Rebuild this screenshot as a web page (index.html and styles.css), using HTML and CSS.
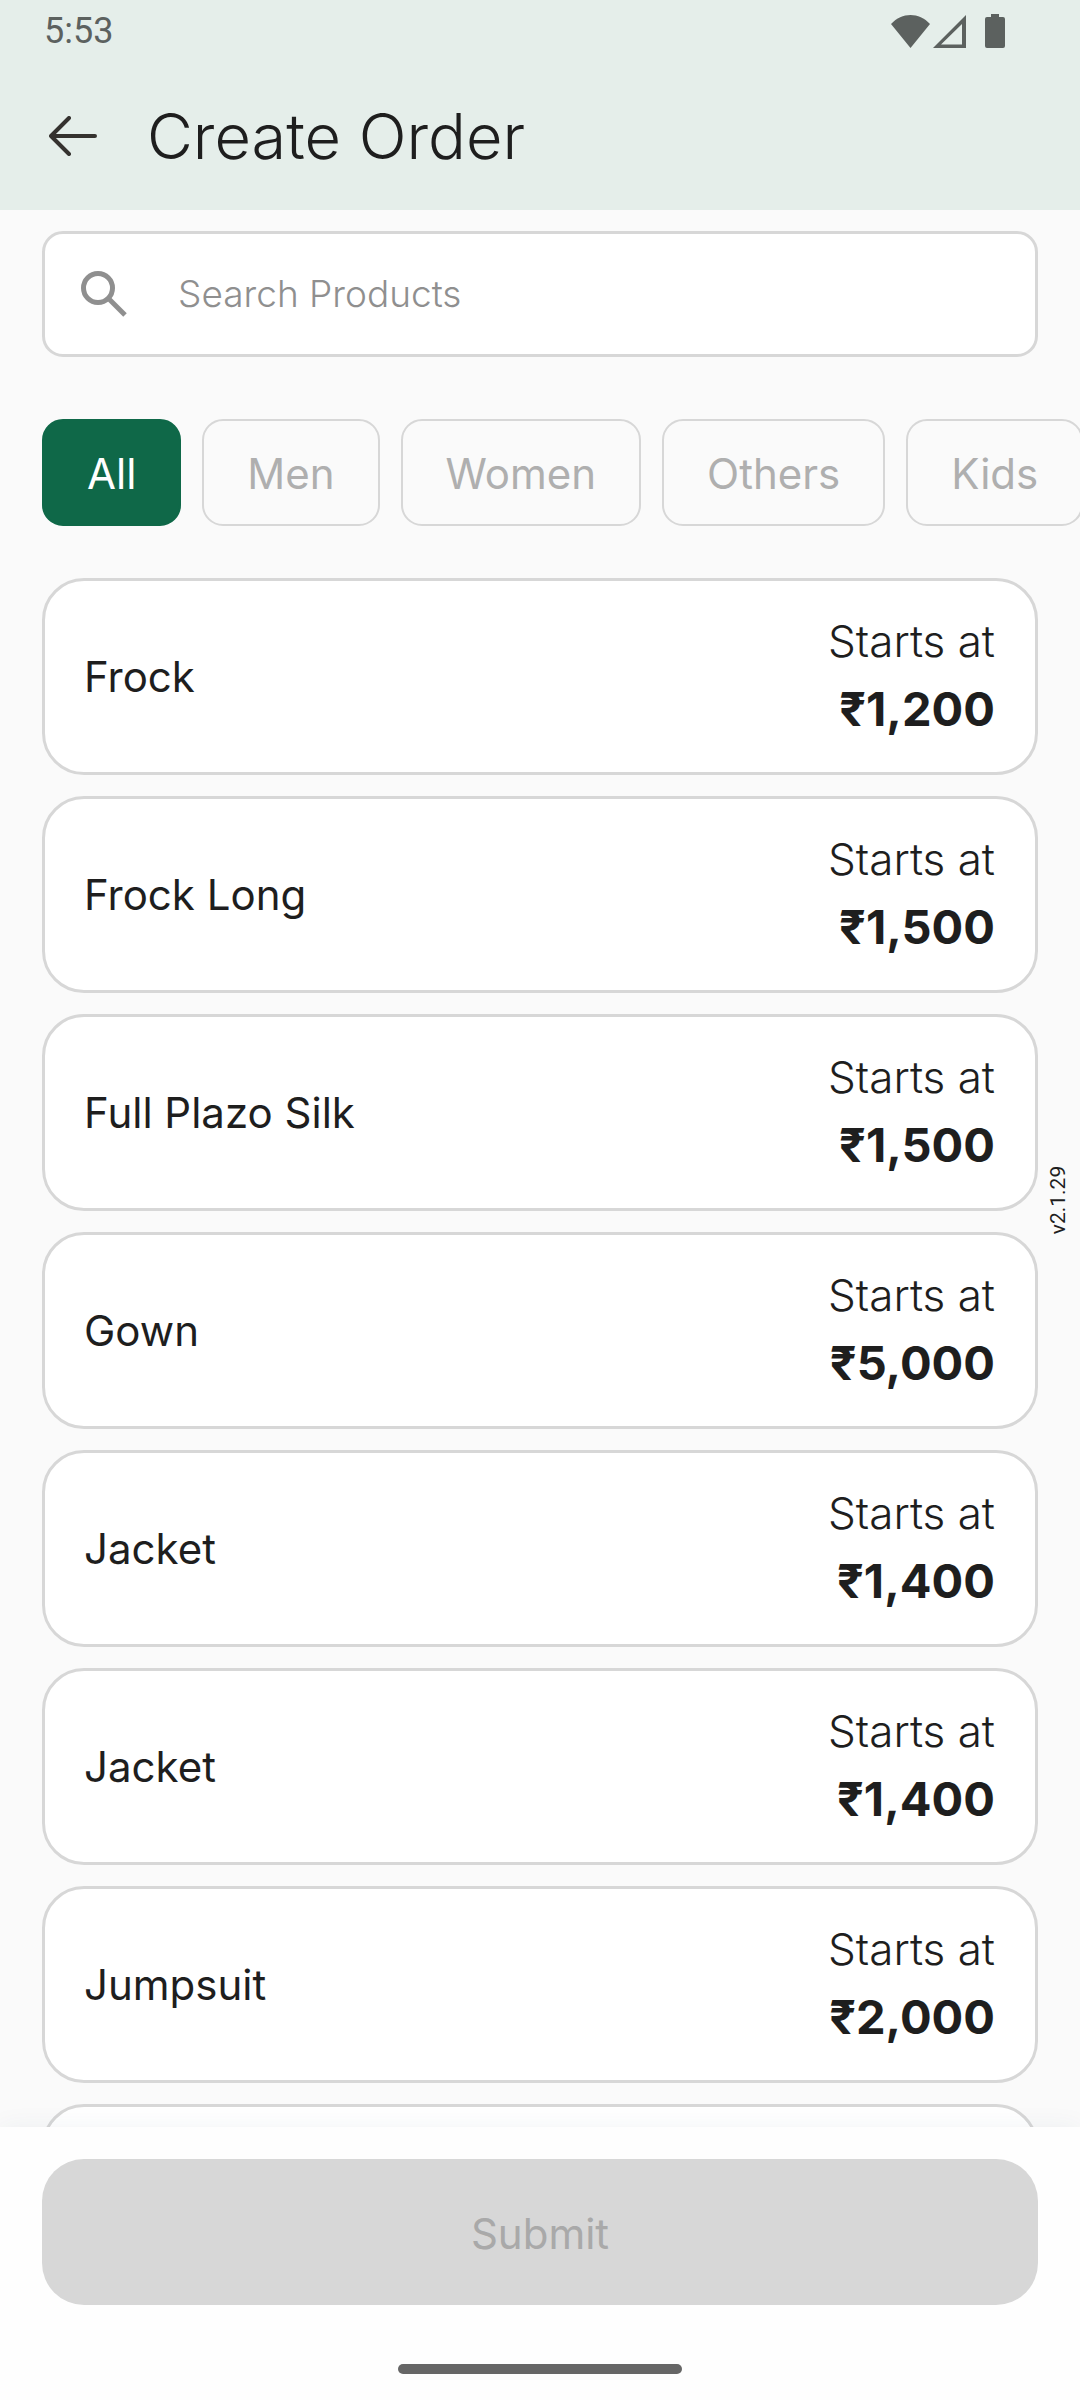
FILE: index.html
```html
<!DOCTYPE html>
<html lang="en">
<head>
    <meta charset="UTF-8">
    <meta name="viewport" content="width=device-width, initial-scale=1.0">
    <title>Create Order</title>
    <link rel="stylesheet" href="styles.css">
</head>
<body>
    <div class="app">
        <header class="header">
            <div class="status-bar">
                <span>5:53</span>
                <div class="status-icons">
                    <svg class="wifi" viewBox="0 0 39 33"><path d="M0 9C11-3 28-3 39 9L19.500 33z"/></svg>
                    <svg class="signal" viewBox="0 0 33 33"><path fill-rule="evenodd" d="M33 0v33H0zM29 9L8 29.500h21z"/></svg>
                    <svg class="battery" viewBox="0 0 20 34"><path d="M6 0h8v3h4a2 2 0 0 1 2 2v27a2 2 0 0 1-2 2H2a2 2 0 0 1-2-2V5a2 2 0 0 1 2-2h4z"/></svg>
                </div>
            </div>
            <div class="title-bar">
                <button class="back" type="button" aria-label="Back">
                    <svg viewBox="0 0 48 40"><path d="M20 2L2 20l18 18M2 20h44"/></svg>
                </button>
                <h1>Create Order</h1>
            </div>
        </header>

        <main class="content">
            <label class="search">
                <svg viewBox="0 0 46 46"><circle cx="17" cy="17" r="14.500"/><path d="M28 28l16 16"/></svg>
                <input type="text" placeholder="Search Products" aria-label="Search Products">
            </label>

            <nav class="categories">
                <button class="chip active" type="button">All</button>
                <button class="chip" type="button">Men</button>
                <button class="chip" type="button">Women</button>
                <button class="chip" type="button">Others</button>
                <button class="chip" type="button">Kids</button>
            </nav>

            <ul class="products">
                <li class="card">
                    <span class="name">Frock</span>
                    <div class="price"><span>Starts at</span><strong>₹1,200</strong></div>
                </li>
                <li class="card">
                    <span class="name">Frock Long</span>
                    <div class="price"><span>Starts at</span><strong>₹1,500</strong></div>
                </li>
                <li class="card">
                    <span class="name">Full Plazo Silk</span>
                    <div class="price"><span>Starts at</span><strong>₹1,500</strong></div>
                </li>
                <li class="card">
                    <span class="name">Gown</span>
                    <div class="price"><span>Starts at</span><strong>₹5,000</strong></div>
                </li>
                <li class="card">
                    <span class="name">Jacket</span>
                    <div class="price"><span>Starts at</span><strong>₹1,400</strong></div>
                </li>
                <li class="card">
                    <span class="name">Jacket</span>
                    <div class="price"><span>Starts at</span><strong>₹1,400</strong></div>
                </li>
                <li class="card">
                    <span class="name">Jumpsuit</span>
                    <div class="price"><span>Starts at</span><strong>₹2,000</strong></div>
                </li>
                <li class="card"></li>
            </ul>
        </main>

        <footer class="footer">
            <button class="submit" type="submit" disabled>Submit</button>
            <div class="home-indicator"></div>
        </footer>

        <span class="version">v2.1.29</span>
    </div>
</body>
</html>
```
FILE: styles.css
```css
:root {
    --primary-color: #0f6848;
    --header-color: #e5eeea;
    --background-color: #fafafa;
    --text-color: #1e1e1e;
    --muted-color: #afafaf;
    --border-color: #d7d7d7;
}

* {
    margin: 0;
    padding: 0;
    box-sizing: border-box;
}

body {
    font-family: Inter, "Liberation Sans", sans-serif;
    font-size: 42px;
    line-height: 52px;
    color: var(--text-color);
    background-color: var(--background-color);
}

button,
input {
    font: inherit;
    border: none;
    background: none;
}

.app {
    position: relative;
    display: flex;
    flex-direction: column;
    height: 100vh;
    overflow: hidden;
}

/* Header */
.header {
    background-color: var(--header-color);
}

.status-bar {
    display: flex;
    justify-content: space-between;
    align-items: center;
    height: 62px;
    padding: 0 75px 0 44px;
    font-family: Roboto, sans-serif;
    font-size: 36px;
    color: #5c615f;
}

.status-icons {
    display: flex;
    align-items: center;
    gap: 3px;
    fill: #5c615f;
}

.wifi {
    width: 39px;
    height: 33px;
}

.signal {
    width: 33px;
    height: 33px;
}

.battery {
    width: 20px;
    height: 34px;
    margin-left: 16px;
}

.title-bar {
    display: flex;
    align-items: center;
    gap: 50px;
    height: 148px;
    padding: 0 49px;
}

.back {
    display: flex;
}

.back svg {
    width: 48px;
    height: 40px;
    fill: none;
    stroke: #35322f;
    stroke-width: 4;
    stroke-linecap: round;
    stroke-linejoin: round;
}

h1 {
    font-size: 63px;
    font-weight: 300;
    line-height: 76px;
}

/* Content */
.content {
    flex: 1;
    min-height: 0;
    overflow: hidden;
    padding: 21px 42px 0;
}

.search {
    display: flex;
    align-items: center;
    gap: 51px;
    height: 126px;
    padding: 0 36px;
    background-color: #fff;
    border: 3px solid var(--border-color);
    border-radius: 21px;
}

.search svg {
    flex: none;
    width: 46px;
    height: 46px;
    fill: none;
    stroke: #8f8f8f;
    stroke-width: 5;
}

.search input {
    flex: 1;
    min-width: 0;
    font-size: 37px;
    font-weight: 300;
    outline: none;
}

.search input::placeholder {
    color: #8f8f8f;
}

.categories {
    display: flex;
    gap: 21px;
    margin: 62px -42px 52px 0;
    overflow: hidden;
}

.chip {
    flex: none;
    height: 107px;
    padding: 3px 43px 0;
    color: var(--muted-color);
    border: 2px solid var(--border-color);
    border-radius: 21px;
}

.chip.active {
    color: #fff;
    background-color: var(--primary-color);
    border-color: var(--primary-color);
}

.products {
    display: flex;
    flex-direction: column;
    gap: 21px;
    list-style: none;
}

.card {
    display: flex;
    justify-content: space-between;
    align-items: center;
    min-height: 197px;
    padding: 0 40px 0 39px;
    background-color: #fff;
    border: 3px solid var(--border-color);
    border-radius: 42px;
}

.price {
    display: flex;
    flex-direction: column;
    align-items: flex-end;
    gap: 12px;
    font-size: 44px;
    font-weight: 300;
}

.price strong {
    font-size: 47px;
    font-weight: 700;
    line-height: 60px;
}

/* Footer */
.footer {
    position: relative;
    display: flex;
    flex-direction: column;
    align-items: center;
    gap: 59px;
    padding: 32px 42px 26px;
    background-color: #fefefe;
    box-shadow: 0 0 24px rgba(40, 70, 110, 0.06);
}

.submit {
    width: 100%;
    height: 146px;
    padding-top: 3px;
    color: #a9a9a9;
    background-color: #d7d7d7;
    border-radius: 42px;
}

.home-indicator {
    width: 284px;
    height: 10px;
    background-color: #666;
    border-radius: 5px;
}

/* App version on the right edge */
.version {
    position: absolute;
    top: 50%;
    right: 10px;
    writing-mode: vertical-rl;
    transform: translateY(-50%) rotate(180deg);
    font-family: Roboto, sans-serif;
    font-size: 21px;
    line-height: 24px;
}
```
